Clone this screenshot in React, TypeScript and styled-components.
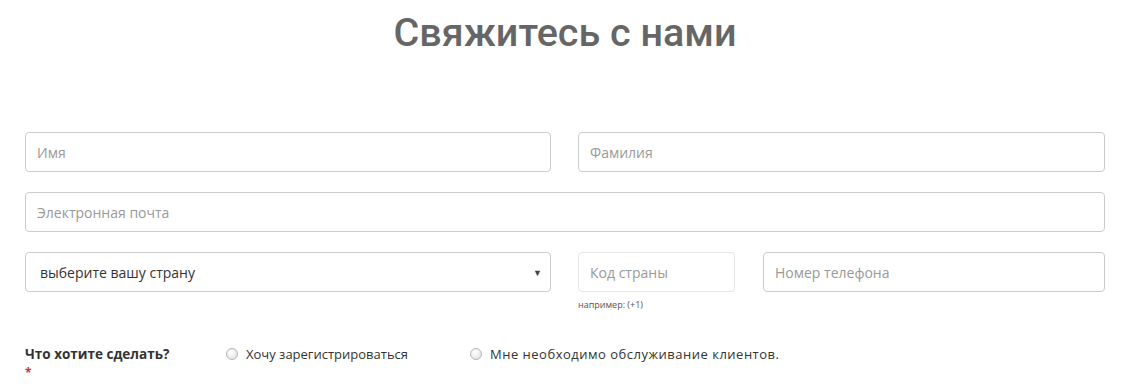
import styled, { createGlobalStyle } from "styled-components";

const Global = createGlobalStyle`
    body {
        margin: 0;
        background: #fff;
        font-family: "Open Sans", "Liberation Sans", sans-serif;
    }
`

const Page = styled.div`
    width: 1080px;
    padding: 0 0 0 25px;
`

const Title = styled.h1`
    margin: 0;
    padding-top: 8px;
    height: 132px;
    box-sizing: border-box;
    text-align: center;
    font-family: Roboto, "Liberation Sans", sans-serif;
    font-weight: 500;
    font-size: 39.5px;
    line-height: 50px;
    color: #666;
`

const Grid = styled.div`
    display: grid;
    grid-template-columns: 526px 527px;
    column-gap: 27px;
    row-gap: 20px;
`

const Field = styled.input<{ $span?: boolean; $light?: boolean }>`
    grid-column: ${p => p.$span ? "1 / span 2" : "auto"};
    box-sizing: border-box;
    width: 100%;
    height: 40px;
    border: 1px solid ${p => p.$light ? "#e6e6e6" : "#ccc"};
    border-radius: 4px;
    padding: 0 11px;
    font-family: "Open Sans", "Liberation Sans", sans-serif;
    font-size: 14px;
    color: #333;
    outline: none;
    &::placeholder {
        color: #999;
    }
`

const Select = styled.div`
    box-sizing: border-box;
    height: 40px;
    border: 1px solid #ccc;
    border-radius: 4px;
    padding: 0 8px 0 14px;
    display: flex;
    align-items: center;
    justify-content: space-between;
    font-size: 14px;
    color: #333;
`

const Arrow = styled.span`
    font-size: 9px;
    color: #444;
`

const PhoneRow = styled.div`
    display: grid;
    grid-template-columns: 157px 1fr;
    column-gap: 28px;
`

const CodeCol = styled.div`
    display: flex;
    flex-direction: column;
`

const Hint = styled.div`
    margin-top: 6px;
    font-size: 9px;
    color: #555;
`

const Choice = styled.div`
    display: flex;
    align-items: flex-start;
    margin-top: 34px;
`

const Question = styled.div`
    width: 201px;
    font-size: 13.5px;
    font-weight: 700;
    color: #333;
    line-height: 18px;
`

const Star = styled.div`
    color: #c33;
    font-size: 12px;
    line-height: 12px;
    margin-top: 4px;
`

const Option = styled.label<{ $width: number; $spacing?: number }>`
    display: flex;
    align-items: center;
    gap: 8px;
    width: ${p => p.$width}px;
    font-size: 13px;
    letter-spacing: ${p => p.$spacing ?? 0}px;
    color: #333;
    line-height: 18px;
`

const Radio = styled.span`
    flex: none;
    width: 10px;
    height: 10px;
    border-radius: 50%;
    border: 1px solid #b5b5b5;
    background: radial-gradient(circle at 40% 35%, #fff, #ddd);
`

export default function App() {
    return <Page>
        <Global />
        <Title>Свяжитесь с нами</Title>
        <Grid>
            <Field placeholder="Имя" />
            <Field placeholder="Фамилия" />
            <Field $span placeholder="Электронная почта" />
            <Select>
                <span>выберите вашу страну</span>
                <Arrow>▼</Arrow>
            </Select>
            <PhoneRow>
                <CodeCol>
                    <Field $light placeholder="Код страны" />
                    <Hint>например: (+1)</Hint>
                </CodeCol>
                <Field placeholder="Номер телефона" />
            </PhoneRow>
        </Grid>
        <Choice>
            <Question>
                Что хотите сделать?
                <Star>*</Star>
            </Question>
            <Option $width={244}><Radio />Хочу зарегистрироваться</Option>
            <Option $width={420} $spacing={0.5}><Radio />Мне необходимо обслуживание клиентов.</Option>
        </Choice>
    </Page>
}
